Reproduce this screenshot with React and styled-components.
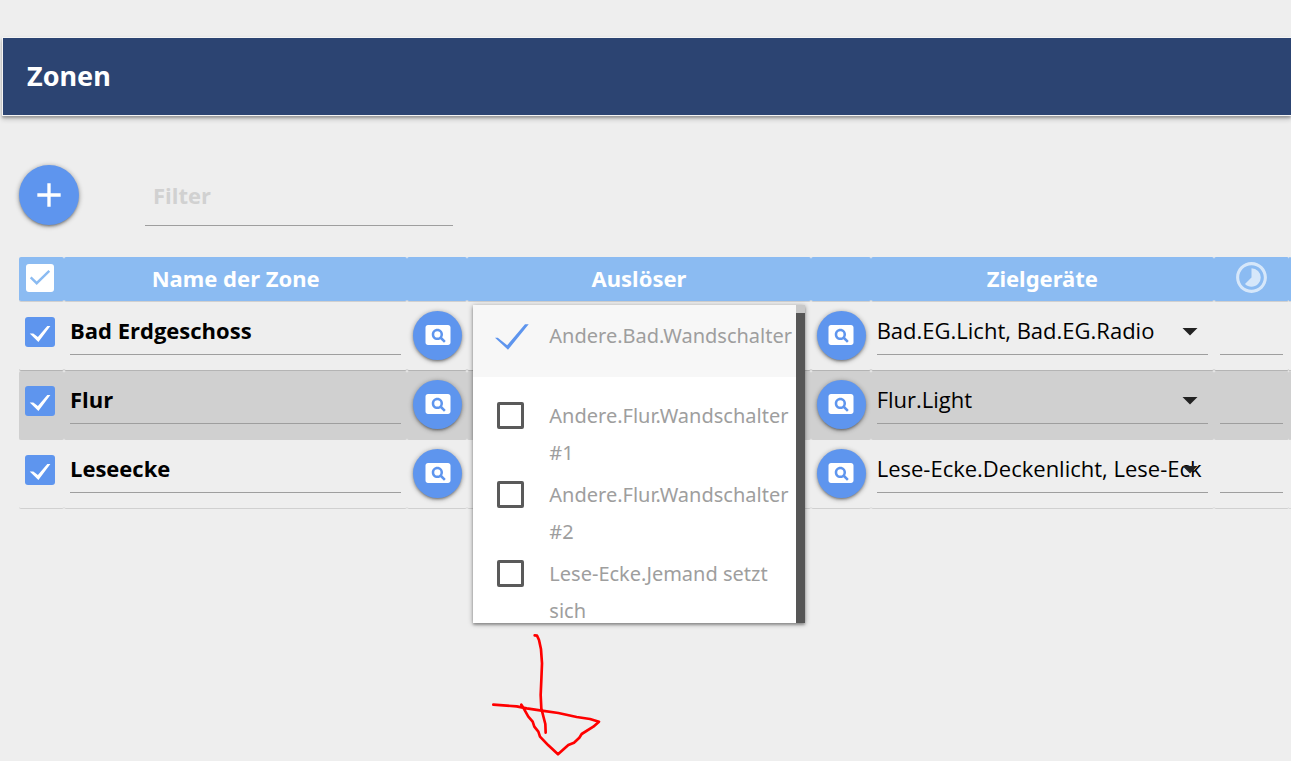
import React, { useState } from 'react';
import styled, { createGlobalStyle } from 'styled-components'
import { MdAdd, MdArrowDropDown, MdPageview, MdTimelapse } from 'react-icons/md'

const GlobalStyle = createGlobalStyle`
  * {
    box-sizing: border-box;
  }
  body {
    margin: 0;
    background: #eeeeee;
    color: #000;
    font-family: "Open Sans", "Noto Sans", sans-serif;
    font-size: 22px;
  }
`

const Page = styled.div`
  position: relative;
  overflow: hidden;
  padding: 37px 0 252px 2px;
`

const TitleBar = styled.header`
  display: flex;
  align-items: center;
  height: 79px;
  padding: 0 24px 2px;
  background: #2c4472;
  border: 1px solid #f4f4f4;
  border-right: 0;
  box-shadow: 0 2px 2px rgba(0, 0, 0, 0.2), 0 3px 5px rgba(0, 0, 0, 0.22);
`

const Title = styled.h1`
  margin: 0;
  color: #fff;
  font-family: "Noto Sans", sans-serif;
  font-size: 27px;
  font-weight: 700;
`

const Content = styled.main`
  padding: 49px 0 0 17px;
`

const Toolbar = styled.div`
  display: flex;
  gap: 66px;
  margin-bottom: 31px;
`

const RoundButton = styled.button`
  display: flex;
  align-items: center;
  justify-content: center;
  width: ${(props) => (props.$large ? 60 : 49)}px;
  height: ${(props) => (props.$large ? 60 : 49)}px;
  padding: ${(props) => (props.$large ? '0' : '0 0 2px')};
  border: 0;
  border-radius: 50%;
  background: #5e95ee;
  color: #fff;
  box-shadow: 0 2px 2px rgba(0, 0, 0, 0.14), 0 3px 1px -2px rgba(0, 0, 0, 0.12), 0 1px 5px rgba(0, 0, 0, 0.4);
`

const TextInput = styled.input`
  display: block;
  width: 100%;
  height: 47px;
  padding: 0 0 2px;
  border: 0;
  border-bottom: 1px solid #9e9e9e;
  border-radius: 0;
  outline: 0;
  background: transparent;
  color: #000;
  font: inherit;
  font-weight: 700;
`

const FilterInput = styled(TextInput)`
  width: 308px;
  height: 61px;
  padding: 0 8px;
  &::placeholder {
    color: #d1d1d1;
    opacity: 1;
  }
`

const Table = styled.table`
  width: 100%;
  table-layout: fixed;
  border-collapse: separate;
  border-spacing: 0;
`

const Col = styled.col`
  width: ${(props) => props.$width}px;
`

const HeadCell = styled.th`
  height: 45px;
  padding: 0 0 3px;
  border-bottom: 1px solid #d0d0d0;
  border-radius: 2px;
  background: #8bbbf2;
  background-clip: padding-box;
  color: #fff;
  font-family: "Noto Sans", sans-serif;
  font-size: 22px;
  font-weight: 700;
  line-height: 30px;
  text-align: center;
  > svg {
    display: block;
    margin: 0 auto;
  }
`

const Cell = styled.td`
  position: relative;
  height: 69px;
  padding: ${(props) => props.$top || 6}px 6px 0;
  border-bottom: 1px solid ${(props) => (props.$dark ? '#b4b4b4' : '#d0d0d0')};
  border-radius: 2px;
  background: ${(props) => (props.$striped ? '#d0d0d0' : 'transparent')};
  vertical-align: top;
`

const Tick = styled.label`
  display: grid;
  width: ${(props) => props.$size}px;
  margin-left: ${(props) => (props.$head ? 7 : 0)}px;
  input,
  svg {
    grid-area: 1 / 1;
    width: ${(props) => props.$size}px;
    height: ${(props) => props.$size}px;
    margin: 0;
  }
  input {
    appearance: none;
    border-radius: 3px;
    background: ${(props) => props.$color};
  }
  svg {
    pointer-events: none;
  }
`

const SelectBox = styled.div`
  display: grid;
  align-items: center;
  svg {
    grid-area: 1 / 1;
    justify-self: end;
    margin-bottom: 2px;
    color: #222;
    pointer-events: none;
  }
`

const Select = styled.select`
  grid-area: 1 / 1;
  width: 100%;
  height: 47px;
  padding: 0 0 2px;
  border: 0;
  border-bottom: 1px solid #9e9e9e;
  border-radius: 0;
  outline: 0;
  appearance: none;
  background: transparent;
  color: #000;
  font: inherit;
`

const Menu = styled.div`
  position: absolute;
  z-index: 2;
  top: 3px;
  left: 6px;
  right: 6px;
  display: flex;
  height: 318px;
  overflow: hidden;
  background: #fff;
  box-shadow: 0 2px 2px rgba(0, 0, 0, 0.2), 0 1px 5px rgba(0, 0, 0, 0.4);
`

const MenuList = styled.ul`
  flex: 1;
  min-width: 0;
  margin: 0;
  padding: 0;
  list-style: none;
`

const MenuItem = styled.li`
  padding: ${(props) => (props.$first ? '12px 0 23px' : '5px 0 0')};
  margin-bottom: ${(props) => (props.$first ? '15px' : '0')};
  background: ${(props) => (props.$first ? '#f7f7f7' : '#fff')};
`

const MenuLabel = styled.label`
  display: flex;
  align-items: flex-start;
  gap: 25px;
  padding-left: 24px;
  color: #9e9e9e;
  font-family: "Noto Sans", sans-serif;
  font-size: 20px;
  line-height: 37px;
`

const MenuMark = styled.span`
  display: grid;
  flex: none;
  padding-top: 5px;
  input,
  svg {
    grid-area: 1 / 1;
    width: 27px;
    height: 27px;
    margin: 0;
    overflow: visible;
  }
  input {
    appearance: none;
    border: 3px solid #5a5a5a;
    border-radius: 2px;
  }
  input:checked {
    border-color: transparent;
  }
`

const Scrollbar = styled.div`
  width: 9px;
  padding-top: 8px;
  background: #c9c9c9;
`

const Thumb = styled.div`
  height: 100%;
  background: #565656;
`

const Sketch = styled.svg`
  position: absolute;
  z-index: 3;
  top: 620px;
  left: 480px;
  width: 140px;
  height: 141px;
  pointer-events: none;
`

const initialZones = [
  { name: 'Bad Erdgeschoss', targets: 'Bad.EG.Licht, Bad.EG.Radio' },
  { name: 'Flur', targets: 'Flur.Light' },
  { name: 'Leseecke', targets: 'Lese-Ecke.Deckenlicht, Lese-Eck' },
]

const triggers = [
  'Andere.Bad.Wandschalter',
  'Andere.Flur.Wandschalter #1',
  'Andere.Flur.Wandschalter #2',
  'Lese-Ecke.Jemand setzt sich',
]

function RowTick({ label }) {
  const [on, setOn] = useState(true)
  return (
    <Tick $size={30} $color='#5e95ee'>
      <input type='checkbox' aria-label={label} checked={on} onChange={() => setOn(!on)} />
      {on && (
        <svg viewBox='0 0 30 30'>
          <path d='M4.7 16.6L8.3 16.6L12.9 20L22.3 9H25.4L13.4 25Z' fill='#fff' />
        </svg>
      )}
    </Tick>
  )
}

function HeadTick() {
  const [on, setOn] = useState(true)
  return (
    <Tick $size={28} $color='#fff' $head>
      <input type='checkbox' aria-label='Alle' checked={on} onChange={() => setOn(!on)} />
      {on && (
        <svg viewBox='0 0 28 28'>
          <path d='M4.7 13.3L10.7 19.2L23.3 6.9' fill='none' stroke='#8bbbf2' strokeWidth='2.4' />
        </svg>
      )}
    </Tick>
  )
}

function TriggerMenu() {
  const [selected, setSelected] = useState([triggers[0]])
  const toggle = (name) =>
    setSelected(selected.includes(name) ? selected.filter((n) => n !== name) : [...selected, name])

  return (
    <Menu>
      <MenuList>
        {triggers.map((name, i) => (
          <MenuItem key={name} $first={i === 0}>
            <MenuLabel>
              <MenuMark>
                <input type='checkbox' checked={selected.includes(name)} onChange={() => toggle(name)} />
                {selected.includes(name) && (
                  <svg viewBox='0 0 27 27'>
                    <path d='M-2 15.8H0.8L10.2 23.2L28 2.3H31.7L11 27.7Z' fill='#5e95ee' />
                  </svg>
                )}
              </MenuMark>
              <span>{name}</span>
            </MenuLabel>
          </MenuItem>
        ))}
      </MenuList>
      <Scrollbar>
        <Thumb />
      </Scrollbar>
    </Menu>
  )
}

function ZoneRow({ zone, index }) {
  const look = { $dark: index === 0, $striped: index % 2 === 1 }
  return (
    <tr>
      <Cell {...look} $top={15}>
        <RowTick label={zone.name} />
      </Cell>
      <Cell {...look}>
        <TextInput aria-label='Name der Zone' defaultValue={zone.name} />
      </Cell>
      <Cell {...look} $top={9}>
        <RoundButton aria-label='Auslöser'>
          <MdPageview size={30} />
        </RoundButton>
      </Cell>
      <Cell {...look}>{index === 0 && <TriggerMenu />}</Cell>
      <Cell {...look} $top={9}>
        <RoundButton aria-label='Zielgeräte'>
          <MdPageview size={30} />
        </RoundButton>
      </Cell>
      <Cell {...look}>
        <SelectBox>
          <Select aria-label='Zielgeräte' defaultValue={zone.targets}>
            <option>{zone.targets}</option>
          </Select>
          <MdArrowDropDown size={36} />
        </SelectBox>
      </Cell>
      <Cell {...look}>
        <TextInput aria-label='Dauer' />
      </Cell>
      <Cell {...look} />
    </tr>
  )
}

function App() {
  return (
    <Page>
      <GlobalStyle />
      <TitleBar>
        <Title>Zonen</Title>
      </TitleBar>
      <Content>
        <Toolbar>
          <RoundButton $large aria-label='Neue Zone'>
            <MdAdd size={40} />
          </RoundButton>
          <FilterInput placeholder='Filter' aria-label='Filter' />
        </Toolbar>
        <Table>
          <colgroup>
            <Col $width={45} />
            <col />
            <Col $width={60} />
            <col />
            <Col $width={60} />
            <col />
            <Col $width={75} />
            <Col $width={2} />
          </colgroup>
          <thead>
            <tr>
              <HeadCell>
                <HeadTick />
              </HeadCell>
              <HeadCell>Name der Zone</HeadCell>
              <HeadCell />
              <HeadCell>Auslöser</HeadCell>
              <HeadCell />
              <HeadCell>Zielgeräte</HeadCell>
              <HeadCell>
                <MdTimelapse size={37} opacity={0.65} />
              </HeadCell>
              <HeadCell />
            </tr>
          </thead>
          <tbody>
            {initialZones.map((zone, i) => (
              <ZoneRow key={zone.name} zone={zone} index={i} />
            ))}
          </tbody>
        </Table>
      </Content>
      <Sketch viewBox='0 0 420 423' fill='none' stroke='#ff0000' strokeWidth='8' strokeLinejoin='round' strokeLinecap='round'>
        <path d='M164 46L171 47L177 60L183 88L186 130L184 180L182 225L184 265L189 285L196 312L197 338' />
        <path d='M40 254L110 259L140 265L185 272L235 279L290 291L330 297L357 305L340 320L305 342L298 353L282 368L265 375L234 403L205 376L180 350L175 335L163 320L158 305L145 290L131 265L124 254' />
      </Sketch>
    </Page>
  );
}


export default App;
